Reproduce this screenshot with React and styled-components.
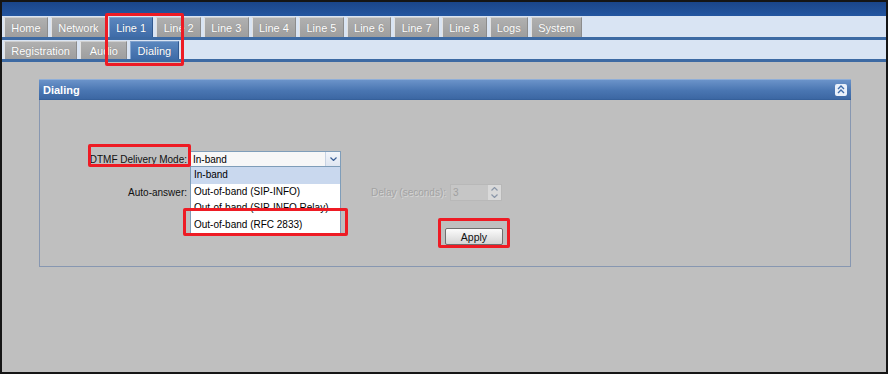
import styled, { createGlobalStyle } from "styled-components";

const GlobalStyle = createGlobalStyle`
  html, body {
    margin: 0;
    padding: 0;
    background: #ffffff;
  }
  body {
    font-family: "Liberation Sans", Arial, sans-serif;
    font-size: 10px;
  }
`;

const Frame = styled.div`
  position: relative;
  width: 888px;
  height: 374px;
  box-sizing: border-box;
  border: 2px solid #151515;
  display: flex;
  flex-direction: column;
  background: #bfbfbf;
`;

const TopBar = styled.div`
  height: 14px;
  background: linear-gradient(#1a4589, #2456a0);
`;

const TabStrip = styled.div`
  display: flex;
  align-items: flex-end;
  gap: 3px;
  height: ${(p) => p.height}px;
  padding-left: 2px;
  background: #d9e4f3;
`;

const Tab = styled.div`
  display: flex;
  align-items: center;
  justify-content: center;
  height: ${(p) => p.height}px;
  min-width: ${(p) => p.minWidth || 0}px;
  padding: 0 6.3px;
  box-sizing: border-box;
  color: #ffffff;
  font-size: 11px;
  white-space: nowrap;
  text-shadow: 0 0 1px rgba(0, 0, 0, 0.25);
  background: ${(p) =>
    p.active
      ? "linear-gradient(#5a86be, #3f6ca8)"
      : "linear-gradient(#b0b0b0, #9e9e9e)"};
  border-top: 1px solid ${(p) => (p.active ? "#7ea0cc" : "#cfcfcf")};
  border-left: 1px solid ${(p) => (p.active ? "#86a6d0" : "#e2e2e2")};
  border-right: 1px solid ${(p) => (p.active ? "#30588f" : "#8c8c8c")};
`;

const Rule = styled.div`
  height: 3px;
  background: #3d6aa3;
`;

const Content = styled.div`
  flex: 1;
  padding: 17px 0 0 37px;
  background: #bfbfbf;
`;

const Panel = styled.div`
  width: 812px;
  height: 188px;
  box-sizing: border-box;
  display: flex;
  flex-direction: column;
  border: 1px solid #8797b1;
  border-top: none;
`;

const PanelHeader = styled.div`
  display: flex;
  align-items: center;
  justify-content: space-between;
  height: 19px;
  padding: 0 4px 0 4px;
  margin: 0 -1px;
  background: linear-gradient(#6b93c9, #4a76b2 55%, #3c67a3);
  border-top: 1px solid #8eaed8;
  border-bottom: 1px solid #36609a;
  color: #ffffff;
  font-weight: bold;
  font-size: 11px;
`;

const CollapseButton = styled.div`
  width: 12px;
  height: 12px;
  border-radius: 2px;
  background: #e9f0fa;
  display: flex;
  align-items: center;
  justify-content: center;
`;

const PanelBody = styled.div`
  flex: 1;
  padding: 51px 0 0 0;
`;

const FormGrid = styled.div`
  display: grid;
  grid-template-columns: 150px 151px 29px 80px 52px;
  grid-template-rows: 16px 17px;
  row-gap: 17px;
  align-items: center;
`;

const Label = styled.div`
  text-align: right;
  padding-right: 3px;
  color: ${(p) => (p.disabled ? "#a3a3a3" : "#111111")};
  text-shadow: ${(p) => (p.disabled ? "1px 1px 0 #d6d6d6" : "none")};
  font-size: 10px;
  white-space: nowrap;
`;

const DelayLabel = styled(Label)`
  text-align: left;
  padding-left: 1px;
`;

const SelectWrap = styled.div`
  position: relative;
  height: 16px;
`;

const SelectBox = styled.div`
  display: flex;
  align-items: center;
  height: 16px;
  box-sizing: border-box;
  border: 1px solid #7f9db9;
  background: #f7f7f7;
  font-size: 10px;
  color: #000;
  padding-left: 2px;
`;

const SelectValue = styled.div`
  flex: 1;
`;

const SelectArrow = styled.div`
  width: 14px;
  height: 14px;
  display: flex;
  align-items: center;
  justify-content: center;
  background: linear-gradient(#f3f6fb, #dfe6f1);
  border-left: 1px solid #c8d3e3;
`;

const OptionList = styled.div`
  position: absolute;
  top: 16px;
  left: 0;
  width: 151px;
  box-sizing: border-box;
  border: 1px solid #7f9db9;
  border-top: none;
  background: #ffffff;
  z-index: 2;
`;

const Option = styled.div`
  height: 16.5px;
  line-height: 16.5px;
  padding-left: 3px;
  font-size: 10px;
  color: #000;
  white-space: nowrap;
  background: ${(p) => (p.selected ? "#c9d8ee" : "#ffffff")};
`;

const Checkbox = styled.div`
  width: 13px;
  height: 13px;
  border: 1px solid #7f9db9;
  background: #fff;
`;

const SpinBox = styled.div`
  display: flex;
  align-items: center;
  height: 17px;
  box-sizing: border-box;
  border: 1px solid #b8b8b8;
  background: #c6c6c6;
`;

const SpinValue = styled.div`
  flex: 1;
  padding-left: 2px;
  color: #a0a0a0;
  font-size: 10px;
`;

const SpinArrows = styled.div`
  width: 13px;
  height: 15px;
  display: flex;
  flex-direction: column;
  align-items: center;
  justify-content: space-around;
  background: #d9d9d9;
`;

const ActionRow = styled.div`
  display: flex;
  padding: 27px 0 0 405px;
`;

const ApplyButton = styled.button`
  width: 58px;
  height: 17px;
  padding: 0;
  border: 1px solid #6f6f6f;
  border-radius: 2px;
  background: linear-gradient(#fbfbfb, #e4e4e4 60%, #d4d4d4);
  font-family: "Liberation Sans", Arial, sans-serif;
  font-size: 10.5px;
  color: #111;
`;

const Highlight = styled.div`
  position: absolute;
  left: ${(p) => p.x}px;
  top: ${(p) => p.y}px;
  width: ${(p) => p.w}px;
  height: ${(p) => p.h}px;
  box-sizing: border-box;
  border: 3px solid #ee1b24;
  border-radius: 2px;
  z-index: 5;
  pointer-events: none;
`;

const mainTabs = [
  "Home",
  "Network",
  "Line 1",
  "Line 2",
  "Line 3",
  "Line 4",
  "Line 5",
  "Line 6",
  "Line 7",
  "Line 8",
  "Logs",
  "System",
];

const subTabs = ["Registration", "Audio", "Dialing"];

const dtmfOptions = [
  "In-band",
  "Out-of-band (SIP-INFO)",
  "Out-of-band (SIP-INFO Relay)",
  "Out-of-band (RFC 2833)",
];

const Chevron = ({ dir = "down", color = "#3b5f95" }) => (
  <svg width="7" height="4" viewBox="0 0 7 4">
    <path
      d={dir === "down" ? "M0.5 0.5 L3.5 3.5 L6.5 0.5" : "M0.5 3.5 L3.5 0.5 L6.5 3.5"}
      fill="none"
      stroke={color}
      strokeWidth="1.2"
    />
  </svg>
);

const DoubleUp = () => (
  <svg width="8" height="9" viewBox="0 0 8 9">
    <path d="M1 4 L4 1 L7 4 M1 8 L4 5 L7 8" fill="none" stroke="#3d6aa8" strokeWidth="1.4" />
  </svg>
);

export default function App() {
  return (
    <>
      <GlobalStyle />
      <Frame>
        <TopBar />
        <TabStrip height={21}>
          {mainTabs.map((t) => (
            <Tab key={t} height={20} active={t === "Line 1"}>
              {t}
            </Tab>
          ))}
        </TabStrip>
        <Rule />
        <TabStrip height={19}>
          {subTabs.map((t) => (
            <Tab key={t} height={18} minWidth={47} active={t === "Dialing"}>
              {t}
            </Tab>
          ))}
        </TabStrip>
        <Rule />
        <Content>
          <Panel>
            <PanelHeader>
              <span>Dialing</span>
              <CollapseButton>
                <DoubleUp />
              </CollapseButton>
            </PanelHeader>
            <PanelBody>
              <FormGrid>
                <Label>DTMF Delivery Mode:</Label>
                <SelectWrap>
                  <SelectBox>
                    <SelectValue>In-band</SelectValue>
                    <SelectArrow>
                      <Chevron />
                    </SelectArrow>
                  </SelectBox>
                  <OptionList>
                    {dtmfOptions.map((o, i) => (
                      <Option key={o} selected={i === 0}>
                        {o}
                      </Option>
                    ))}
                  </OptionList>
                </SelectWrap>
                <div />
                <div />
                <div />

                <Label>Auto-answer:</Label>
                <Checkbox />
                <div />
                <DelayLabel disabled>Delay (seconds):</DelayLabel>
                <SpinBox>
                  <SpinValue>3</SpinValue>
                  <SpinArrows>
                    <Chevron dir="up" color="#8a96a8" />
                    <Chevron dir="down" color="#8a96a8" />
                  </SpinArrows>
                </SpinBox>
              </FormGrid>
              <ActionRow>
                <ApplyButton>Apply</ApplyButton>
              </ActionRow>
            </PanelBody>
          </Panel>
        </Content>
        <Highlight x={103} y={11} w={79} h={53} />
        <Highlight x={86} y={142} w={103} h={23} />
        <Highlight x={181} y={206} w={165} h={28} />
        <Highlight x={436} y={216} w={72} h={30} />
      </Frame>
    </>
  );
}
